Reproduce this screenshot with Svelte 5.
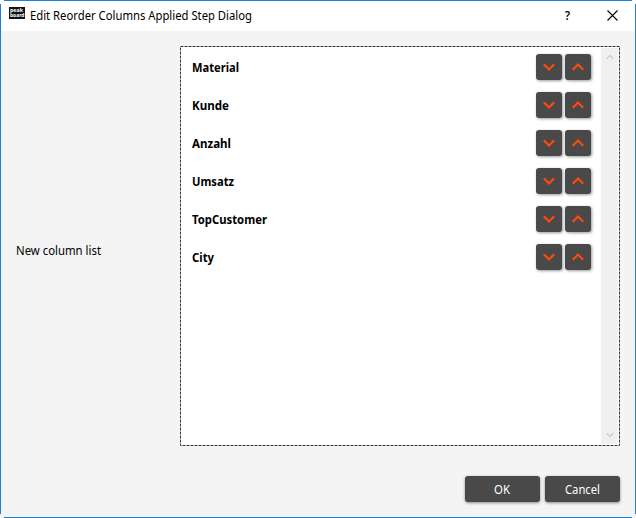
<script>
  const columns = ['Material', 'Kunde', 'Anzahl', 'Umsatz', 'TopCustomer', 'City'];
  const widths = { Material: 47, Kunde: 37, Anzahl: 39, Umsatz: 42, TopCustomer: 75, City: 22 };
</script>

{#snippet label(text, width, cls = '')}
  <svg class="label {cls}" {width} height="18"><text x="0" y="13" textLength={width} lengthAdjust="spacingAndGlyphs">{text}</text></svg>
{/snippet}

<div class="window">
  <header>
    <svg class="logo" width="16" height="12" viewBox="0 0 16 12">
      <rect width="16" height="12" fill="#111" />
      <text x="1" y="5.3" textLength="13" lengthAdjust="spacingAndGlyphs">peak</text>
      <text x="1" y="10" textLength="14.5" lengthAdjust="spacingAndGlyphs">board</text>
    </svg>
    <div class="title">{@render label('Edit Reorder Columns Applied Step Dialog', 222)}</div>
    <button class="help" aria-label="Help">{@render label('?', 5, 'semi')}</button>
    <button class="close" aria-label="Close">
      <svg width="11" height="11" viewBox="0 0 11 11"><path d="M.5 .5l10 10M10.5 .5l-10 10" stroke="#000" stroke-width="1.1" /></svg>
    </button>
  </header>
  <main>
    <div class="caption">{@render label('New column list', 85)}</div>
    <div class="listbox">
      <svg class="outline" width="440" height="400"><rect x=".5" y=".5" width="439" height="399" /></svg>
      <ul>
        {#each columns as name}
          <li>
            <span class="name">{@render label(name, widths[name], 'bold')}</span>
            <span class="moves">
              <button aria-label="Move down"><svg width="12" height="8" viewBox="0 0 12 8"><path d="M.8 1.2L6 6.4L11.2 1.2" /></svg></button>
              <button aria-label="Move up"><svg width="12" height="8" viewBox="0 0 12 8"><path d="M.8 6.8L6 1.6L11.2 6.8" /></svg></button>
            </span>
          </li>
        {/each}
      </ul>
      <div class="scroll">
        <svg width="8" height="6" viewBox="0 0 8 6"><path d="M.7 4.7L4 1.4L7.3 4.7" /></svg>
        <svg width="8" height="6" viewBox="0 0 8 6"><path d="M.7 1.3L4 4.6L7.3 1.3" /></svg>
      </div>
    </div>
  </main>
  <footer>
    <button>{@render label('OK', 16)}</button>
    <button>{@render label('Cancel', 35)}</button>
  </footer>
  <svg class="frame" width="636" height="518"><path d="M4 .5H632M635.5 4V514M632 517.5H4M.5 514V4" /></svg>
</div>

<style>
  :global(body) { overflow: hidden; background: #fff; }
  .window {
    position: relative; width: 636px; height: 518px; box-sizing: border-box;
    display: flex; flex-direction: column; background: #f4f4f4;
    font: 12px "Noto Sans", "Open Sans", sans-serif; color: #000;
    border-radius: 2px; overflow: hidden;
  }
  svg { display: block; flex: none; }
  button { border: 0; padding: 0; margin: 0; background: none; display: flex; align-items: center; justify-content: center; }
  .label { overflow: visible; }
  .label text { font: 12px "Noto Sans", "Open Sans", sans-serif; fill: currentColor; }
  .bold text { font-weight: 700; }
  .semi text { font-weight: 600; }
  header { height: 31px; flex: none; background: #fff; display: flex; align-items: flex-start; }
  .logo { margin: 7px 0 0 9px; overflow: visible; }
  .logo text { font: 700 6px "Open Sans", sans-serif; fill: #fff; }
  .title { margin: 7px 0 0 5px; }
  .help { margin: 7px 0 0 auto; }
  .close { margin: 10px 18px 0 37px; }
  main { display: flex; align-items: center; padding: 15px 16px 0; }
  .caption { width: 164px; padding-top: 10px; }
  .listbox { position: relative; width: 440px; height: 400px; box-sizing: border-box; padding: 1px; background: #fff; display: flex; }
  .outline { position: absolute; left: 0; top: 0; }
  .outline rect { fill: none; stroke: #333; stroke-dasharray: 3 1; }
  ul { list-style: none; margin: 0; padding: 1px 9px 0 11px; flex: 1; }
  li { height: 38px; display: flex; align-items: center; justify-content: space-between; }
  .name { padding-top: 2px; }
  .moves { display: flex; gap: 3px; }
  .moves button { width: 26px; height: 26px; border-radius: 3px; background: #494949; box-shadow: 1px 1px 3px rgba(0, 0, 0, .4); }
  .moves path { fill: none; stroke: #ff4a0a; stroke-width: 2.1; }
  .scroll { width: 17px; margin: 1px; background: #f0f0f0; display: flex; flex-direction: column; align-items: center; justify-content: space-between; padding: 6px 0; box-sizing: border-box; }
  .scroll path { fill: none; stroke: #cdcdcd; stroke-width: 1.4; }
  footer { display: flex; justify-content: flex-end; gap: 5px; padding: 30px 16px 0; }
  footer button { width: 75px; height: 26px; padding-top: 2px; box-sizing: border-box; border-radius: 3px; background: #494949; color: #fff; box-shadow: 0 1px 3px rgba(0, 0, 0, .45); }
  footer button:first-child { padding-right: 1px; }
  .frame { position: absolute; left: 0; top: 0; pointer-events: none; }
  .frame path { fill: none; stroke: #1883d7; }
</style>
